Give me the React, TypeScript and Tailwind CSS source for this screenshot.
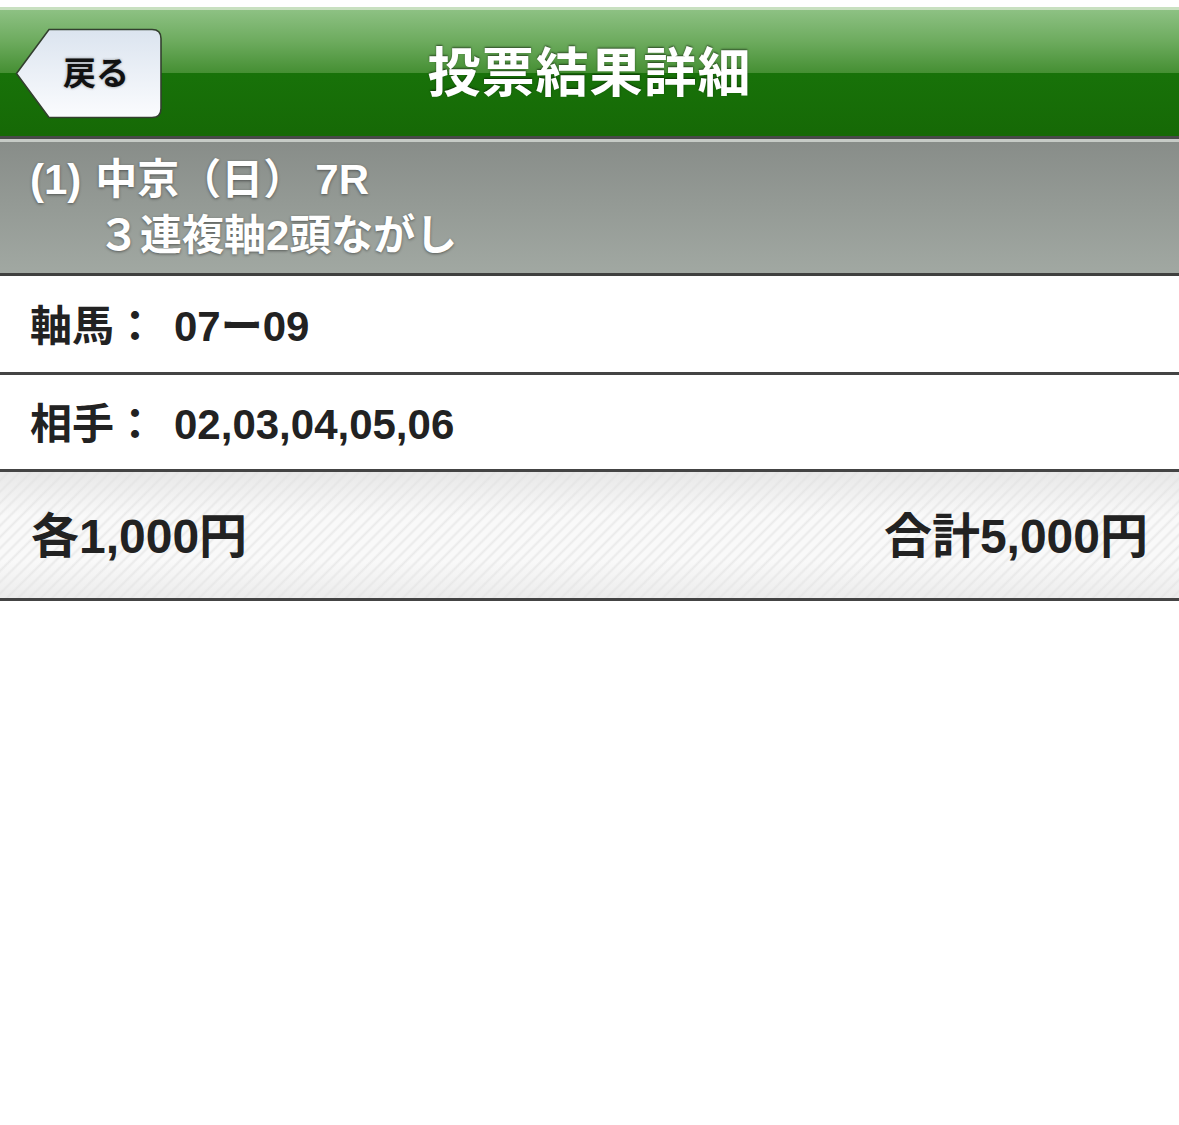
import React from "react";

function BackButton() {
  return (
    <button className="relative w-[148px] h-[91px] flex items-center justify-center">
      <svg
        className="absolute inset-0"
        width="148"
        height="91"
        viewBox="0 0 148 91"
      >
        <defs>
          <linearGradient id="backFill" x1="0" y1="0" x2="0" y2="1">
            <stop offset="0%" stopColor="#dbe4ef" />
            <stop offset="100%" stopColor="#fbfcfe" />
          </linearGradient>
        </defs>
        <path
          d="M1.5,45.5 L34,1.5 H137 Q146,1.5 146,10.5 V80.5 Q146,89.5 137,89.5 H34 Z"
          fill="url(#backFill)"
          stroke="#33402f"
          strokeWidth="1.6"
        />
      </svg>
      <span className="relative pl-[14px] text-[33px] font-bold text-[#111] [text-shadow:0_0_3px_rgba(0,0,0,0.4)]">
        戻る
      </span>
    </button>
  );
}

export default function App() {
  return (
    <div className="min-h-[1125px] bg-white font-['Liberation_Sans','Noto_Sans_CJK_JP',sans-serif]">
      <div className="h-[7px] bg-white" />
      <header className="grid grid-cols-[1fr_auto_1fr] items-center h-[132px] border-t-[3px] border-b-[3px] border-t-[#c8e0c0] border-b-[#484a48] bg-[linear-gradient(to_bottom,#8dc183_0%,#6dab5e_25%,#458f33_50%,#187209_50%,#166906_100%)]">
        <div className="pl-[15px] pt-[1px]">
          <BackButton />
        </div>
        <h1 className="text-[53px] font-bold text-white leading-none tracking-[1px] [text-shadow:0_-1px_2px_rgba(0,0,0,0.55)]">
          投票結果詳細
        </h1>
        <div />
      </header>

      <section className="border-t-[3px] border-b-[3px] border-t-[#c6cbc6] border-b-[#3f403f] bg-[linear-gradient(to_bottom,#888d89,#a1a8a2)] pt-[10px] pb-[9px] pl-[30px] text-white font-bold text-[42px] leading-[56px] [text-shadow:0_1px_3px_rgba(0,0,0,0.45)]">
        <div className="flex whitespace-pre">
          <span className="mr-[14px]">(1)</span>
          <span className="mr-[10px]">中京（日）</span>
          <span>7R</span>
        </div>
        <div className="pl-[68px]">３連複軸2頭ながし</div>
      </section>

      <div className="flex items-center h-[99px] pt-[4px] border-b-[3px] border-[#444] pl-[30px] text-[#222] font-bold text-[42px]">
        <span className="w-[144px]">軸馬：</span>
        <span>07ー09</span>
      </div>

      <div className="flex items-center h-[97px] pt-[4px] border-b-[3px] border-[#444] pl-[30px] text-[#222] font-bold text-[42px]">
        <span className="w-[144px]">相手：</span>
        <span>02,03,04,05,06</span>
      </div>

      <div className="flex items-center justify-between h-[129px] pt-[4px] border-b-[3px] border-[#444] px-[31px] text-[#222] font-bold text-[48px] bg-[linear-gradient(to_bottom,rgba(225,225,225,0.7),rgba(255,255,255,0)_35%,rgba(255,255,255,0)_70%,rgba(228,228,228,0.6)),repeating-linear-gradient(135deg,#f9f9f9_0px,#f9f9f9_4px,#eaeaea_6px,#f9f9f9_8px)]">
        <span>各1,000円</span>
        <span>合計5,000円</span>
      </div>
    </div>
  );
}
